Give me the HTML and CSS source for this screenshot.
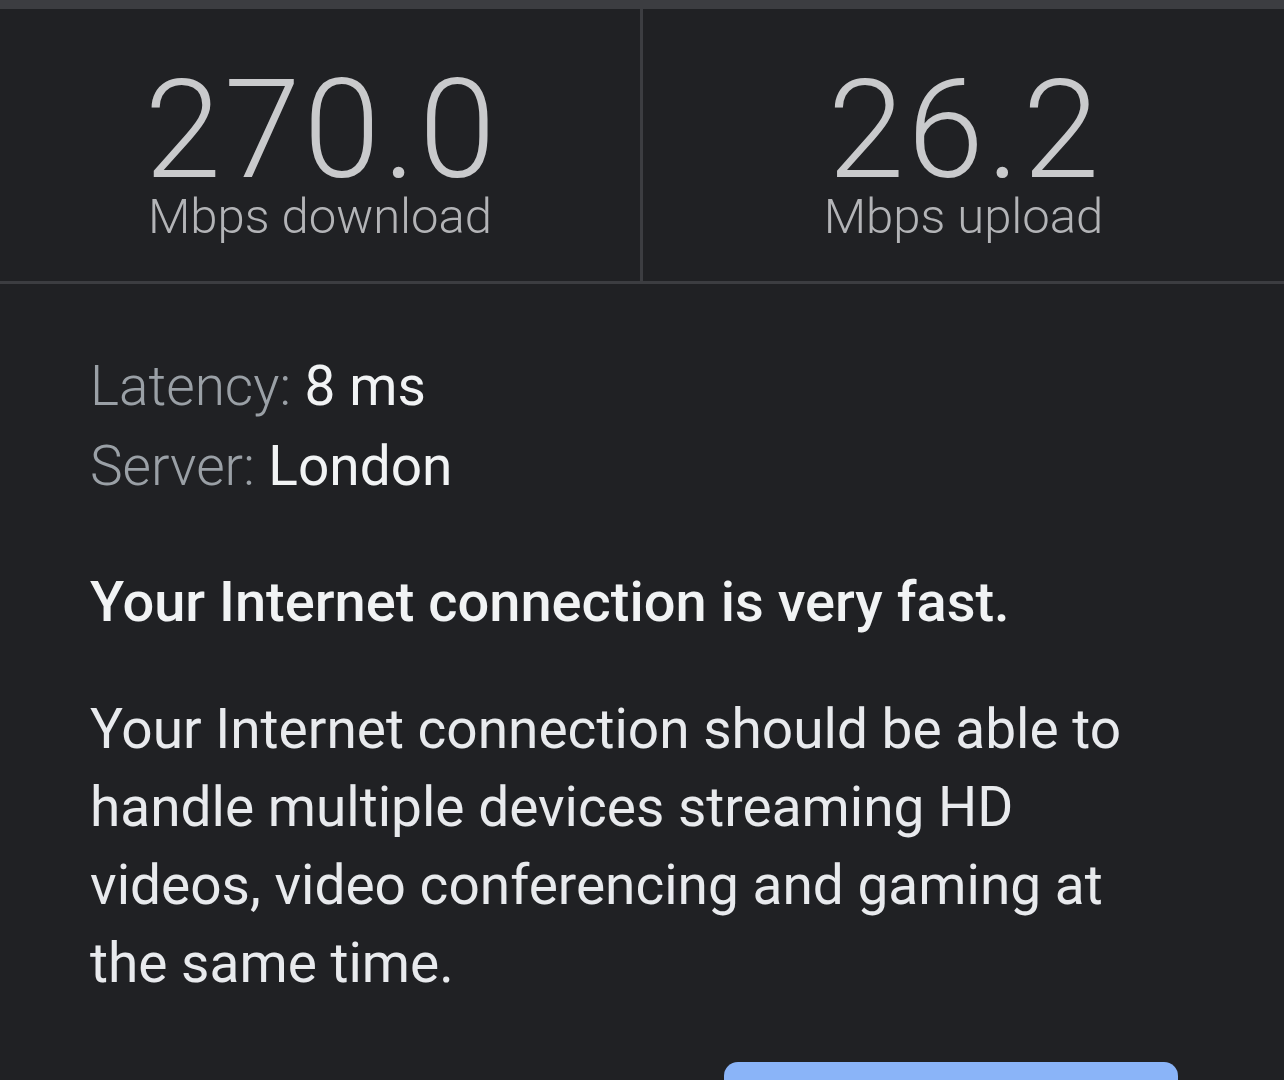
FILE: index.html
```html
<!DOCTYPE html>
<html>
<head>
	<title>Internet speed test</title>
	<link rel="stylesheet" href="styles.css">
</head>
<body>
	<div class="topbar"></div>

	<div class="speeds">
		<div class="speed">
			<div class="speed-value">270.0</div>
			<div class="speed-unit">Mbps download</div>
		</div>
		<div class="speed">
			<div class="speed-value">26.2</div>
			<div class="speed-unit">Mbps upload</div>
		</div>
	</div>

	<div class="details">
		<div class="stats">
			<div class="stat"><span class="stat-label">Latency:</span> <span class="stat-value">8 ms</span></div>
			<div class="stat"><span class="stat-label">Server:</span> <span class="stat-value">London</span></div>
		</div>

		<h2 class="verdict">Your Internet connection is very fast.</h2>

		<p class="summary">
			Your Internet connection should be able to handle multiple devices streaming HD videos, video conferencing and gaming at the same time.
		</p>

		<div class="actions">
			<button class="primary-button">Learn more</button>
		</div>
	</div>
</body>
</html>
```

FILE: styles.css
```css
/* Dark speed test result card */

body {
	margin: 0;
	background-color: #202124;
	font-family: Roboto, "Liberation Sans", sans-serif;
	color: #e8eaed;
	overflow: hidden;
}

.topbar {
	height: 9px;
	background-color: #3c3d41;
}

.speeds {
	display: grid;
	grid-template-columns: 640px 1fr;
	border-bottom: 3px solid #3c3d41;
}

.speed {
	height: 272px;
	display: flex;
	flex-direction: column;
	align-items: center;
	padding-top: 62px;
	box-sizing: border-box;
}

.speed + .speed {
	border-left: 3px solid #3c3d41;
}

.speed-value {
	font-size: 138px;
	font-weight: 300;
	line-height: 118px;
	letter-spacing: 3px;
	margin-right: -3px;
	color: #c9cacc;
}

.speed-unit {
	font-size: 49px;
	font-weight: 300;
	line-height: 56px;
	color: #b3b4b7;
}

.details {
	padding: 62px 90px 0;
}

.stat {
	font-size: 55px;
	line-height: 80px;
}

.stat-label {
	font-weight: 300;
	color: #9aa0a6;
}

.stat-value {
	font-weight: 400;
	color: #f1f3f4;
}

.verdict {
	margin: 56px 0 0;
	font-size: 56px;
	font-weight: 500;
	line-height: 80px;
	color: #f1f3f4;
}

.summary {
	max-width: 1060px;
	margin: 48px 0 0;
	font-size: 55px;
	line-height: 78px;
	color: #e8eaed;
}

.actions {
	display: flex;
	justify-content: flex-end;
	padding-right: 16px;
	margin-top: 60px;
}

.primary-button {
	width: 454px;
	height: 80px;
	border: none;
	border-radius: 14px;
	background-color: #8ab4f8;
	color: #202124;
	font-family: inherit;
	font-size: 40px;
	font-weight: 500;
}
```
